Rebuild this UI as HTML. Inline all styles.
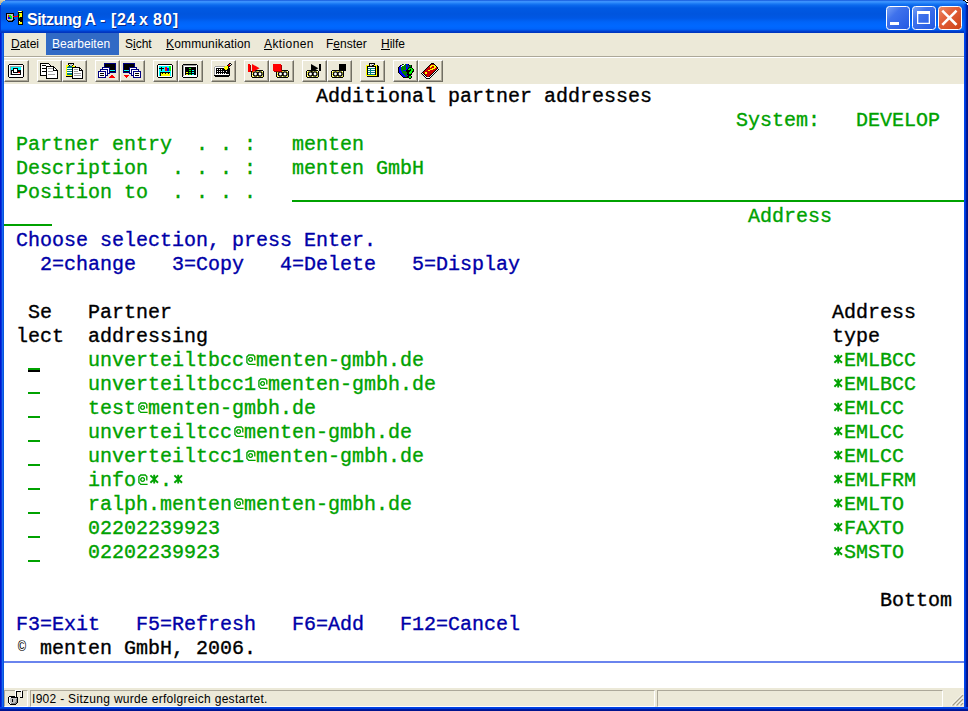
<!DOCTYPE html>
<html><head><meta charset="utf-8">
<style>
*{margin:0;padding:0;box-sizing:border-box}
html,body{width:968px;height:711px;overflow:hidden;background:#fff}
body{position:relative;font-family:"Liberation Sans",sans-serif}
.abs{position:absolute}
#title{left:0;top:0;width:968px;height:33px;
background:linear-gradient(to bottom,#0845d0 0px,#3a8dfb 1px,#3d95ff 2px,#2583f8 3px,#0c6aee 5px,#0059e3 8px,#0055de 14px,#0057e4 18px,#0064f8 22px,#0068ff 26px,#0064fa 29px,#0056ec 30px,#0046d6 31px,#0036c0 32px,#0036c0 33px)}
.ttext{left:28px;top:11px;font:bold 16px "Liberation Sans",sans-serif;color:#fff;text-shadow:1px 1px 0 #0a2a8a;white-space:nowrap;line-height:18px}
.lb{left:0;width:4px;top:33px;height:678px;background:linear-gradient(to right,#0019cf 0,#0019cf 1px,#0a34dc 1px,#0a34dc 2px,#166aef 2px,#166aef 3px,#0855dd 3px)}
.rb{left:964px;width:4px;top:33px;height:678px;background:linear-gradient(to right,#0046ec 0,#0046ec 1px,#0038d8 1px,#0038d8 2px,#001a98 2px,#001a98 3px,#00138a 3px)}
.bb{left:0;top:707px;width:968px;height:4px;background:linear-gradient(to bottom,#0042e8 0,#0042e8 1px,#003cd6 1px,#003cd6 2px,#0018a0 2px,#0018a0 3px,#00138f 3px)}
#menu{left:4px;top:33px;width:960px;height:23px;background:#ece9d8}
.mi{position:absolute;top:0;height:22px;font-size:12px;line-height:22px;color:#000;white-space:nowrap}
.mi u{text-decoration:none;border-bottom:1px solid currentColor;line-height:10px;display:inline-block}
#sep1{left:4px;top:56px;width:960px;height:1px;background:#aca899}
#sep2{left:4px;top:57px;width:960px;height:1px;background:#fff}
#tool{left:4px;top:58px;width:960px;height:26px;background:#ece9d8}
.btn{position:absolute;top:60px;width:25px;height:22px;border-left:1px solid #fff;border-top:1px solid #fff;border-right:1px solid #716f64;border-bottom:1px solid #716f64;box-shadow:inset -1px -1px 0 #aca899;background:#ece9d8}
.btn svg{position:absolute;left:3px;top:2px}
#term{left:4px;top:84px;width:960px;height:604px;background:#fff}
.t{position:absolute;font:20px "Liberation Mono",monospace;line-height:24px;height:24px;white-space:pre;-webkit-text-stroke:0.35px currentColor}
.at{display:inline-block;width:12px;text-align:center;font-size:15px;-webkit-text-stroke:0;vertical-align:top;position:relative;top:1px}
.ast{display:inline-block;vertical-align:top}
.cp{display:inline-block;width:12px;text-align:center;font-size:14px;-webkit-text-stroke:0;vertical-align:top;position:relative;top:-2px}
.g{color:#00a200}.k{color:#000}.b{color:#0000a8}
.ul{position:absolute;height:2px;background:#00a200}
#oia{left:4px;top:661px;width:960px;height:2px;background:#6a84ee}
#status{left:4px;top:688px;width:960px;height:19px;background:#ece9d8}
.pan{position:absolute;top:690px;height:17px;border-left:1px solid #aca899;border-top:1px solid #aca899;border-right:1px solid #fff;border-bottom:1px solid #fff}
</style></head><body>
<div id="title" class="abs"></div>
<div class="abs ttext" style="left:27px;letter-spacing:-0.5px">Sitzung A</div><div class="abs ttext" style="left:100px">-</div><div class="abs ttext" style="left:111px;letter-spacing:0.6px">[24</div><div class="abs ttext" style="left:139px">x</div><div class="abs ttext" style="left:153px;letter-spacing:1px">80]</div>

<div id="menu" class="abs"></div>
<div class="abs" style="left:46px;top:33px;width:73px;height:22px;background:#316ac5"></div>
<div class="mi" style="left:11px;top:33px"><u>D</u>atei</div>
<div class="mi" style="left:52px;top:33px;color:#fff"><u style="border-color:#0a246a">B</u>earbeiten</div>
<div class="mi" style="left:125px;top:33px">S<u>i</u>cht</div>
<div class="mi" style="left:166px;top:33px;letter-spacing:0.15px"><u>K</u>ommunikation</div>
<div class="mi" style="left:264px;top:33px;letter-spacing:0.4px"><u>A</u>ktionen</div>
<div class="mi" style="left:326px;top:33px">F<u>e</u>nster</div>
<div class="mi" style="left:381px;top:33px"><u>H</u>ilfe</div>
<div id="sep1" class="abs"></div><div id="sep2" class="abs"></div>
<div id="tool" class="abs"></div>
<div class="btn" style="left:4px"></div>
<div class="btn" style="left:37px"></div>
<div class="btn" style="left:62px"></div>
<div class="btn" style="left:95px"></div>
<div class="btn" style="left:120px"></div>
<div class="btn" style="left:153px"></div>
<div class="btn" style="left:178px"></div>
<div class="btn" style="left:211px"></div>
<div class="btn" style="left:244px"></div>
<div class="btn" style="left:269px"></div>
<div class="btn" style="left:302px"></div>
<div class="btn" style="left:327px"></div>
<div class="btn" style="left:360px"></div>
<div class="btn" style="left:393px"></div>
<div class="btn" style="left:418px"></div>
<svg class="abs" style="left:0;top:0" width="460" height="84" shape-rendering="crispEdges"><rect x="9" y="64" width="14" height="1" fill="#000"/><rect x="8" y="65" width="1" height="1" fill="#000"/><rect x="9" y="65" width="14" height="1" fill="#fff"/><rect x="23" y="65" width="1" height="1" fill="#000"/><rect x="8" y="66" width="1" height="1" fill="#000"/><rect x="9" y="66" width="1" height="1" fill="#fff"/><rect x="10" y="66" width="12" height="1" fill="#a0a0a0"/><rect x="22" y="66" width="1" height="1" fill="#fff"/><rect x="23" y="66" width="1" height="1" fill="#000"/><rect x="8" y="67" width="1" height="1" fill="#000"/><rect x="9" y="67" width="1" height="1" fill="#fff"/><rect x="10" y="67" width="1" height="1" fill="#a0a0a0"/><rect x="11" y="67" width="10" height="1" fill="#00ffff"/><rect x="21" y="67" width="2" height="1" fill="#fff"/><rect x="23" y="67" width="1" height="1" fill="#000"/><rect x="8" y="68" width="1" height="1" fill="#000"/><rect x="9" y="68" width="1" height="1" fill="#fff"/><rect x="10" y="68" width="1" height="1" fill="#a0a0a0"/><rect x="11" y="68" width="2" height="1" fill="#00ffff"/><rect x="13" y="68" width="5" height="1" fill="#000"/><rect x="18" y="68" width="3" height="1" fill="#00ffff"/><rect x="21" y="68" width="2" height="1" fill="#fff"/><rect x="23" y="68" width="1" height="1" fill="#000"/><rect x="8" y="69" width="1" height="1" fill="#000"/><rect x="9" y="69" width="1" height="1" fill="#fff"/><rect x="10" y="69" width="1" height="1" fill="#a0a0a0"/><rect x="11" y="69" width="2" height="1" fill="#00ffff"/><rect x="13" y="69" width="1" height="1" fill="#000"/><rect x="14" y="69" width="3" height="1" fill="#fff"/><rect x="17" y="69" width="1" height="1" fill="#000"/><rect x="18" y="69" width="3" height="1" fill="#00ffff"/><rect x="21" y="69" width="2" height="1" fill="#fff"/><rect x="23" y="69" width="1" height="1" fill="#000"/><rect x="8" y="70" width="1" height="1" fill="#000"/><rect x="9" y="70" width="1" height="1" fill="#fff"/><rect x="10" y="70" width="1" height="1" fill="#a0a0a0"/><rect x="11" y="70" width="3" height="1" fill="#000"/><rect x="14" y="70" width="3" height="1" fill="#fff"/><rect x="17" y="70" width="4" height="1" fill="#000"/><rect x="21" y="70" width="2" height="1" fill="#fff"/><rect x="23" y="70" width="1" height="1" fill="#000"/><rect x="8" y="71" width="1" height="1" fill="#000"/><rect x="9" y="71" width="1" height="1" fill="#fff"/><rect x="10" y="71" width="1" height="1" fill="#a0a0a0"/><rect x="11" y="71" width="1" height="1" fill="#000"/><rect x="12" y="71" width="1" height="1" fill="#fff"/><rect x="13" y="71" width="1" height="1" fill="#000"/><rect x="14" y="71" width="3" height="1" fill="#fff"/><rect x="17" y="71" width="4" height="1" fill="#000"/><rect x="21" y="71" width="2" height="1" fill="#fff"/><rect x="23" y="71" width="1" height="1" fill="#000"/><rect x="8" y="72" width="1" height="1" fill="#000"/><rect x="9" y="72" width="1" height="1" fill="#fff"/><rect x="10" y="72" width="1" height="1" fill="#a0a0a0"/><rect x="11" y="72" width="1" height="1" fill="#000"/><rect x="12" y="72" width="1" height="1" fill="#fff"/><rect x="13" y="72" width="5" height="1" fill="#000"/><rect x="18" y="72" width="2" height="1" fill="#ff0000"/><rect x="20" y="72" width="1" height="1" fill="#000"/><rect x="21" y="72" width="2" height="1" fill="#fff"/><rect x="23" y="72" width="1" height="1" fill="#000"/><rect x="8" y="73" width="1" height="1" fill="#000"/><rect x="9" y="73" width="1" height="1" fill="#fff"/><rect x="10" y="73" width="1" height="1" fill="#a0a0a0"/><rect x="11" y="73" width="1" height="1" fill="#000"/><rect x="12" y="73" width="8" height="1" fill="#fff"/><rect x="20" y="73" width="1" height="1" fill="#000"/><rect x="21" y="73" width="2" height="1" fill="#fff"/><rect x="23" y="73" width="1" height="1" fill="#000"/><rect x="8" y="74" width="1" height="1" fill="#000"/><rect x="9" y="74" width="1" height="1" fill="#fff"/><rect x="10" y="74" width="1" height="1" fill="#a0a0a0"/><rect x="11" y="74" width="10" height="1" fill="#000"/><rect x="21" y="74" width="2" height="1" fill="#fff"/><rect x="23" y="74" width="1" height="1" fill="#000"/><rect x="8" y="75" width="1" height="1" fill="#000"/><rect x="9" y="75" width="14" height="1" fill="#fff"/><rect x="23" y="75" width="1" height="1" fill="#000"/><rect x="8" y="76" width="1" height="1" fill="#000"/><rect x="9" y="76" width="14" height="1" fill="#fff"/><rect x="23" y="76" width="1" height="1" fill="#000"/><rect x="9" y="77" width="14" height="1" fill="#000"/><rect x="40" y="63" width="9" height="1" fill="#000"/><rect x="40" y="64" width="1" height="1" fill="#000"/><rect x="41" y="64" width="8" height="1" fill="#fff"/><rect x="49" y="64" width="1" height="1" fill="#000"/><rect x="40" y="65" width="1" height="1" fill="#000"/><rect x="41" y="65" width="1" height="1" fill="#fff"/><rect x="42" y="65" width="4" height="1" fill="#000"/><rect x="46" y="65" width="4" height="1" fill="#fff"/><rect x="50" y="65" width="1" height="1" fill="#000"/><rect x="40" y="66" width="1" height="1" fill="#000"/><rect x="41" y="66" width="5" height="1" fill="#fff"/><rect x="46" y="66" width="8" height="1" fill="#000"/><rect x="40" y="67" width="1" height="1" fill="#000"/><rect x="41" y="67" width="5" height="1" fill="#fff"/><rect x="46" y="67" width="1" height="1" fill="#000"/><rect x="47" y="67" width="6" height="1" fill="#fff"/><rect x="53" y="67" width="2" height="1" fill="#000"/><rect x="40" y="68" width="1" height="1" fill="#000"/><rect x="41" y="68" width="1" height="1" fill="#fff"/><rect x="42" y="68" width="5" height="1" fill="#000"/><rect x="47" y="68" width="1" height="1" fill="#fff"/><rect x="48" y="68" width="5" height="1" fill="#a0a0a0"/><rect x="53" y="68" width="1" height="1" fill="#000"/><rect x="54" y="68" width="1" height="1" fill="#fff"/><rect x="55" y="68" width="1" height="1" fill="#000"/><rect x="40" y="69" width="1" height="1" fill="#000"/><rect x="41" y="69" width="5" height="1" fill="#fff"/><rect x="46" y="69" width="1" height="1" fill="#000"/><rect x="47" y="69" width="6" height="1" fill="#fff"/><rect x="53" y="69" width="1" height="1" fill="#000"/><rect x="54" y="69" width="2" height="1" fill="#fff"/><rect x="56" y="69" width="1" height="1" fill="#000"/><rect x="40" y="70" width="1" height="1" fill="#000"/><rect x="41" y="70" width="5" height="1" fill="#fff"/><rect x="46" y="70" width="1" height="1" fill="#000"/><rect x="47" y="70" width="6" height="1" fill="#fff"/><rect x="53" y="70" width="5" height="1" fill="#000"/><rect x="40" y="71" width="1" height="1" fill="#000"/><rect x="41" y="71" width="1" height="1" fill="#fff"/><rect x="42" y="71" width="5" height="1" fill="#000"/><rect x="47" y="71" width="1" height="1" fill="#fff"/><rect x="48" y="71" width="5" height="1" fill="#a0a0a0"/><rect x="53" y="71" width="4" height="1" fill="#fff"/><rect x="57" y="71" width="1" height="1" fill="#000"/><rect x="40" y="72" width="1" height="1" fill="#000"/><rect x="41" y="72" width="5" height="1" fill="#fff"/><rect x="46" y="72" width="1" height="1" fill="#000"/><rect x="47" y="72" width="10" height="1" fill="#fff"/><rect x="57" y="72" width="1" height="1" fill="#000"/><rect x="40" y="73" width="1" height="1" fill="#000"/><rect x="41" y="73" width="5" height="1" fill="#fff"/><rect x="46" y="73" width="1" height="1" fill="#000"/><rect x="47" y="73" width="10" height="1" fill="#fff"/><rect x="57" y="73" width="1" height="1" fill="#000"/><rect x="40" y="74" width="1" height="1" fill="#000"/><rect x="41" y="74" width="5" height="1" fill="#fff"/><rect x="46" y="74" width="1" height="1" fill="#000"/><rect x="47" y="74" width="1" height="1" fill="#fff"/><rect x="48" y="74" width="7" height="1" fill="#a0a0a0"/><rect x="55" y="74" width="2" height="1" fill="#fff"/><rect x="57" y="74" width="1" height="1" fill="#000"/><rect x="40" y="75" width="7" height="1" fill="#000"/><rect x="47" y="75" width="10" height="1" fill="#fff"/><rect x="57" y="75" width="1" height="1" fill="#000"/><rect x="46" y="76" width="1" height="1" fill="#000"/><rect x="47" y="76" width="10" height="1" fill="#fff"/><rect x="57" y="76" width="1" height="1" fill="#000"/><rect x="46" y="77" width="1" height="1" fill="#000"/><rect x="47" y="77" width="10" height="1" fill="#fff"/><rect x="57" y="77" width="1" height="1" fill="#000"/><rect x="46" y="78" width="12" height="1" fill="#000"/><rect x="68" y="63" width="6" height="1" fill="#000"/><rect x="68" y="64" width="1" height="1" fill="#000"/><rect x="69" y="64" width="1" height="1" fill="#fff"/><rect x="70" y="64" width="2" height="1" fill="#c0c0c0"/><rect x="72" y="64" width="1" height="1" fill="#fff"/><rect x="73" y="64" width="1" height="1" fill="#000"/><rect x="66" y="65" width="3" height="1" fill="#ffff00"/><rect x="69" y="65" width="1" height="1" fill="#000"/><rect x="70" y="65" width="2" height="1" fill="#c0c0c0"/><rect x="72" y="65" width="1" height="1" fill="#000"/><rect x="73" y="65" width="1" height="1" fill="#ffff00"/><rect x="66" y="66" width="2" height="1" fill="#ffff00"/><rect x="68" y="66" width="4" height="1" fill="#008080"/><rect x="72" y="66" width="3" height="1" fill="#ffff00"/><rect x="75" y="66" width="1" height="1" fill="#000"/><rect x="66" y="67" width="1" height="1" fill="#ffff00"/><rect x="67" y="67" width="5" height="1" fill="#008080"/><rect x="72" y="67" width="8" height="1" fill="#000"/><rect x="66" y="68" width="1" height="1" fill="#ffff00"/><rect x="67" y="68" width="5" height="1" fill="#fff"/><rect x="72" y="68" width="1" height="1" fill="#000"/><rect x="73" y="68" width="6" height="1" fill="#fff"/><rect x="79" y="68" width="2" height="1" fill="#000"/><rect x="66" y="69" width="1" height="1" fill="#ffff00"/><rect x="67" y="69" width="5" height="1" fill="#008080"/><rect x="72" y="69" width="1" height="1" fill="#000"/><rect x="73" y="69" width="1" height="1" fill="#fff"/><rect x="74" y="69" width="4" height="1" fill="#a0a0a0"/><rect x="78" y="69" width="1" height="1" fill="#fff"/><rect x="79" y="69" width="1" height="1" fill="#000"/><rect x="80" y="69" width="1" height="1" fill="#fff"/><rect x="81" y="69" width="1" height="1" fill="#000"/><rect x="66" y="70" width="1" height="1" fill="#ffff00"/><rect x="67" y="70" width="5" height="1" fill="#fff"/><rect x="72" y="70" width="1" height="1" fill="#000"/><rect x="73" y="70" width="6" height="1" fill="#fff"/><rect x="79" y="70" width="4" height="1" fill="#000"/><rect x="66" y="71" width="1" height="1" fill="#ffff00"/><rect x="67" y="71" width="5" height="1" fill="#008080"/><rect x="72" y="71" width="1" height="1" fill="#000"/><rect x="73" y="71" width="1" height="1" fill="#fff"/><rect x="74" y="71" width="4" height="1" fill="#a0a0a0"/><rect x="78" y="71" width="4" height="1" fill="#fff"/><rect x="82" y="71" width="1" height="1" fill="#000"/><rect x="66" y="72" width="1" height="1" fill="#ffff00"/><rect x="67" y="72" width="5" height="1" fill="#fff"/><rect x="72" y="72" width="1" height="1" fill="#000"/><rect x="73" y="72" width="9" height="1" fill="#fff"/><rect x="82" y="72" width="1" height="1" fill="#000"/><rect x="66" y="73" width="1" height="1" fill="#ffff00"/><rect x="67" y="73" width="5" height="1" fill="#008080"/><rect x="72" y="73" width="1" height="1" fill="#000"/><rect x="73" y="73" width="1" height="1" fill="#fff"/><rect x="74" y="73" width="7" height="1" fill="#a0a0a0"/><rect x="81" y="73" width="1" height="1" fill="#fff"/><rect x="82" y="73" width="1" height="1" fill="#000"/><rect x="66" y="74" width="1" height="1" fill="#ffff00"/><rect x="67" y="74" width="5" height="1" fill="#008080"/><rect x="72" y="74" width="1" height="1" fill="#000"/><rect x="73" y="74" width="9" height="1" fill="#fff"/><rect x="82" y="74" width="1" height="1" fill="#000"/><rect x="66" y="75" width="6" height="1" fill="#ffff00"/><rect x="72" y="75" width="1" height="1" fill="#000"/><rect x="73" y="75" width="1" height="1" fill="#fff"/><rect x="74" y="75" width="7" height="1" fill="#a0a0a0"/><rect x="81" y="75" width="1" height="1" fill="#fff"/><rect x="82" y="75" width="1" height="1" fill="#000"/><rect x="66" y="76" width="7" height="1" fill="#000"/><rect x="73" y="76" width="9" height="1" fill="#fff"/><rect x="82" y="76" width="1" height="1" fill="#000"/><rect x="72" y="77" width="1" height="1" fill="#000"/><rect x="73" y="77" width="9" height="1" fill="#fff"/><rect x="82" y="77" width="1" height="1" fill="#000"/><rect x="72" y="78" width="11" height="1" fill="#000"/><rect x="104" y="63" width="12" height="10" fill="#000080"/><rect x="105" y="64" width="10" height="8" fill="#000"/><rect x="109" y="70" width="6" height="1" fill="#00ffff"/><rect x="102" y="67" width="8" height="7" fill="#000080"/><rect x="103" y="68" width="6" height="5" fill="#fff"/><rect x="100" y="69" width="8" height="7" fill="#000080"/><rect x="101" y="70" width="6" height="5" fill="#fff"/><rect x="98" y="71" width="8" height="7" fill="#000080"/><rect x="99" y="72" width="6" height="5" fill="#fff"/><rect x="100" y="73" width="4" height="1" fill="#000"/><rect x="100" y="75" width="4" height="1" fill="#000"/><polygon points="108.5,77.5 111.5,74.5 114.5,77.5" fill="#ff0000"/><rect x="123" y="63" width="12" height="10" fill="#000080"/><rect x="124" y="64" width="10" height="8" fill="#000"/><rect x="124" y="70" width="5" height="1" fill="#00ffff"/><rect x="129" y="67" width="8" height="7" fill="#000080"/><rect x="130" y="68" width="6" height="5" fill="#fff"/><rect x="131" y="69" width="8" height="7" fill="#000080"/><rect x="132" y="70" width="6" height="5" fill="#fff"/><rect x="133" y="71" width="8" height="7" fill="#000080"/><rect x="134" y="72" width="6" height="5" fill="#fff"/><rect x="135" y="73" width="4" height="1" fill="#000"/><rect x="135" y="75" width="4" height="1" fill="#000"/><polygon points="123.5,75 129.5,75 126.5,78" fill="#ff0000"/><rect x="158" y="64" width="14" height="1" fill="#000"/><rect x="157" y="65" width="1" height="1" fill="#000"/><rect x="158" y="65" width="14" height="1" fill="#fff"/><rect x="172" y="65" width="1" height="1" fill="#000"/><rect x="157" y="66" width="1" height="1" fill="#000"/><rect x="158" y="66" width="1" height="1" fill="#fff"/><rect x="159" y="66" width="10" height="1" fill="#00ffff"/><rect x="169" y="66" width="2" height="1" fill="#00ff00"/><rect x="171" y="66" width="1" height="1" fill="#fff"/><rect x="172" y="66" width="1" height="1" fill="#000"/><rect x="157" y="67" width="1" height="1" fill="#000"/><rect x="158" y="67" width="1" height="1" fill="#fff"/><rect x="159" y="67" width="2" height="1" fill="#00ffff"/><rect x="161" y="67" width="1" height="1" fill="#000"/><rect x="162" y="67" width="3" height="1" fill="#00ffff"/><rect x="165" y="67" width="2" height="1" fill="#ff0000"/><rect x="167" y="67" width="2" height="1" fill="#00ffff"/><rect x="169" y="67" width="2" height="1" fill="#00ff00"/><rect x="171" y="67" width="1" height="1" fill="#fff"/><rect x="172" y="67" width="1" height="1" fill="#000"/><rect x="157" y="68" width="1" height="1" fill="#000"/><rect x="158" y="68" width="1" height="1" fill="#fff"/><rect x="159" y="68" width="5" height="1" fill="#000"/><rect x="164" y="68" width="1" height="1" fill="#00ffff"/><rect x="165" y="68" width="2" height="1" fill="#ff0000"/><rect x="167" y="68" width="2" height="1" fill="#0000ff"/><rect x="169" y="68" width="2" height="1" fill="#00ff00"/><rect x="171" y="68" width="1" height="1" fill="#fff"/><rect x="172" y="68" width="1" height="1" fill="#000"/><rect x="157" y="69" width="1" height="1" fill="#000"/><rect x="158" y="69" width="1" height="1" fill="#fff"/><rect x="159" y="69" width="2" height="1" fill="#00ffff"/><rect x="161" y="69" width="1" height="1" fill="#000"/><rect x="162" y="69" width="3" height="1" fill="#00ffff"/><rect x="165" y="69" width="2" height="1" fill="#ff0000"/><rect x="167" y="69" width="2" height="1" fill="#0000ff"/><rect x="169" y="69" width="2" height="1" fill="#00ff00"/><rect x="171" y="69" width="1" height="1" fill="#fff"/><rect x="172" y="69" width="1" height="1" fill="#000"/><rect x="157" y="70" width="1" height="1" fill="#000"/><rect x="158" y="70" width="1" height="1" fill="#fff"/><rect x="159" y="70" width="2" height="1" fill="#00ffff"/><rect x="161" y="70" width="1" height="1" fill="#000"/><rect x="162" y="70" width="3" height="1" fill="#00ffff"/><rect x="165" y="70" width="2" height="1" fill="#ff0000"/><rect x="167" y="70" width="2" height="1" fill="#0000ff"/><rect x="169" y="70" width="2" height="1" fill="#00ff00"/><rect x="171" y="70" width="1" height="1" fill="#fff"/><rect x="172" y="70" width="1" height="1" fill="#000"/><rect x="157" y="71" width="1" height="1" fill="#000"/><rect x="158" y="71" width="1" height="1" fill="#fff"/><rect x="159" y="71" width="12" height="1" fill="#00ffff"/><rect x="171" y="71" width="1" height="1" fill="#fff"/><rect x="172" y="71" width="1" height="1" fill="#000"/><rect x="157" y="72" width="1" height="1" fill="#000"/><rect x="158" y="72" width="1" height="1" fill="#fff"/><rect x="159" y="72" width="1" height="1" fill="#00ffff"/><rect x="160" y="72" width="10" height="1" fill="#000"/><rect x="170" y="72" width="1" height="1" fill="#00ffff"/><rect x="171" y="72" width="1" height="1" fill="#fff"/><rect x="172" y="72" width="1" height="1" fill="#000"/><rect x="157" y="73" width="1" height="1" fill="#000"/><rect x="158" y="73" width="1" height="1" fill="#fff"/><rect x="159" y="73" width="1" height="1" fill="#00ffff"/><rect x="160" y="73" width="1" height="1" fill="#000"/><rect x="161" y="73" width="1" height="1" fill="#ffff00"/><rect x="162" y="73" width="1" height="1" fill="#000"/><rect x="163" y="73" width="2" height="1" fill="#ffff00"/><rect x="165" y="73" width="1" height="1" fill="#000"/><rect x="166" y="73" width="2" height="1" fill="#ffff00"/><rect x="168" y="73" width="1" height="1" fill="#000"/><rect x="169" y="73" width="1" height="1" fill="#ffff00"/><rect x="170" y="73" width="1" height="1" fill="#00ffff"/><rect x="171" y="73" width="1" height="1" fill="#fff"/><rect x="172" y="73" width="1" height="1" fill="#000"/><rect x="157" y="74" width="1" height="1" fill="#000"/><rect x="158" y="74" width="1" height="1" fill="#fff"/><rect x="159" y="74" width="1" height="1" fill="#00ffff"/><rect x="160" y="74" width="1" height="1" fill="#000"/><rect x="161" y="74" width="9" height="1" fill="#ffff00"/><rect x="170" y="74" width="1" height="1" fill="#00ffff"/><rect x="171" y="74" width="1" height="1" fill="#fff"/><rect x="172" y="74" width="1" height="1" fill="#000"/><rect x="157" y="75" width="1" height="1" fill="#000"/><rect x="158" y="75" width="1" height="1" fill="#fff"/><rect x="159" y="75" width="1" height="1" fill="#00ffff"/><rect x="160" y="75" width="1" height="1" fill="#000"/><rect x="161" y="75" width="9" height="1" fill="#ffff00"/><rect x="170" y="75" width="1" height="1" fill="#00ffff"/><rect x="171" y="75" width="1" height="1" fill="#fff"/><rect x="172" y="75" width="1" height="1" fill="#000"/><rect x="157" y="76" width="1" height="1" fill="#000"/><rect x="158" y="76" width="14" height="1" fill="#fff"/><rect x="172" y="76" width="1" height="1" fill="#000"/><rect x="158" y="77" width="14" height="1" fill="#000"/><rect x="183" y="64" width="14" height="1" fill="#000"/><rect x="182" y="65" width="1" height="1" fill="#000"/><rect x="183" y="65" width="13" height="1" fill="#a0a0a0"/><rect x="196" y="65" width="1" height="1" fill="#fff"/><rect x="197" y="65" width="1" height="1" fill="#000"/><rect x="182" y="66" width="1" height="1" fill="#000"/><rect x="183" y="66" width="1" height="1" fill="#a0a0a0"/><rect x="184" y="66" width="13" height="1" fill="#fff"/><rect x="197" y="66" width="1" height="1" fill="#000"/><rect x="182" y="67" width="1" height="1" fill="#000"/><rect x="183" y="67" width="1" height="1" fill="#a0a0a0"/><rect x="184" y="67" width="1" height="1" fill="#fff"/><rect x="185" y="67" width="11" height="1" fill="#000"/><rect x="196" y="67" width="1" height="1" fill="#fff"/><rect x="197" y="67" width="1" height="1" fill="#000"/><rect x="182" y="68" width="1" height="1" fill="#000"/><rect x="183" y="68" width="1" height="1" fill="#a0a0a0"/><rect x="184" y="68" width="1" height="1" fill="#fff"/><rect x="185" y="68" width="4" height="1" fill="#000"/><rect x="189" y="68" width="2" height="1" fill="#00ff00"/><rect x="191" y="68" width="5" height="1" fill="#000"/><rect x="196" y="68" width="1" height="1" fill="#fff"/><rect x="197" y="68" width="1" height="1" fill="#000"/><rect x="182" y="69" width="1" height="1" fill="#000"/><rect x="183" y="69" width="1" height="1" fill="#a0a0a0"/><rect x="184" y="69" width="1" height="1" fill="#fff"/><rect x="185" y="69" width="11" height="1" fill="#000"/><rect x="196" y="69" width="1" height="1" fill="#fff"/><rect x="197" y="69" width="1" height="1" fill="#000"/><rect x="182" y="70" width="1" height="1" fill="#000"/><rect x="183" y="70" width="1" height="1" fill="#a0a0a0"/><rect x="184" y="70" width="1" height="1" fill="#fff"/><rect x="185" y="70" width="4" height="1" fill="#000"/><rect x="189" y="70" width="2" height="1" fill="#00ff00"/><rect x="191" y="70" width="1" height="1" fill="#000"/><rect x="192" y="70" width="2" height="1" fill="#00ffff"/><rect x="194" y="70" width="2" height="1" fill="#000"/><rect x="196" y="70" width="1" height="1" fill="#fff"/><rect x="197" y="70" width="1" height="1" fill="#000"/><rect x="182" y="71" width="1" height="1" fill="#000"/><rect x="183" y="71" width="1" height="1" fill="#a0a0a0"/><rect x="184" y="71" width="1" height="1" fill="#fff"/><rect x="185" y="71" width="11" height="1" fill="#000"/><rect x="196" y="71" width="1" height="1" fill="#fff"/><rect x="197" y="71" width="1" height="1" fill="#000"/><rect x="182" y="72" width="1" height="1" fill="#000"/><rect x="183" y="72" width="1" height="1" fill="#a0a0a0"/><rect x="184" y="72" width="1" height="1" fill="#fff"/><rect x="185" y="72" width="1" height="1" fill="#000"/><rect x="186" y="72" width="2" height="1" fill="#ffff00"/><rect x="188" y="72" width="1" height="1" fill="#000"/><rect x="189" y="72" width="2" height="1" fill="#00ff00"/><rect x="191" y="72" width="1" height="1" fill="#000"/><rect x="192" y="72" width="2" height="1" fill="#00ffff"/><rect x="194" y="72" width="2" height="1" fill="#000"/><rect x="196" y="72" width="1" height="1" fill="#fff"/><rect x="197" y="72" width="1" height="1" fill="#000"/><rect x="182" y="73" width="1" height="1" fill="#000"/><rect x="183" y="73" width="1" height="1" fill="#a0a0a0"/><rect x="184" y="73" width="1" height="1" fill="#fff"/><rect x="185" y="73" width="11" height="1" fill="#000"/><rect x="196" y="73" width="1" height="1" fill="#fff"/><rect x="197" y="73" width="1" height="1" fill="#000"/><rect x="182" y="74" width="1" height="1" fill="#000"/><rect x="183" y="74" width="1" height="1" fill="#a0a0a0"/><rect x="184" y="74" width="1" height="1" fill="#fff"/><rect x="185" y="74" width="1" height="1" fill="#000"/><rect x="186" y="74" width="2" height="1" fill="#ffff00"/><rect x="188" y="74" width="1" height="1" fill="#000"/><rect x="189" y="74" width="2" height="1" fill="#00ff00"/><rect x="191" y="74" width="1" height="1" fill="#000"/><rect x="192" y="74" width="2" height="1" fill="#00ffff"/><rect x="194" y="74" width="2" height="1" fill="#000"/><rect x="196" y="74" width="1" height="1" fill="#fff"/><rect x="197" y="74" width="1" height="1" fill="#000"/><rect x="182" y="75" width="1" height="1" fill="#000"/><rect x="183" y="75" width="1" height="1" fill="#a0a0a0"/><rect x="184" y="75" width="13" height="1" fill="#fff"/><rect x="197" y="75" width="1" height="1" fill="#000"/><rect x="182" y="76" width="1" height="1" fill="#000"/><rect x="183" y="76" width="14" height="1" fill="#fff"/><rect x="197" y="76" width="1" height="1" fill="#000"/><rect x="183" y="77" width="14" height="1" fill="#000"/><rect x="229" y="63" width="2" height="1" fill="#000"/><rect x="228" y="64" width="1" height="1" fill="#000"/><rect x="229" y="64" width="1" height="1" fill="#ff0000"/><rect x="230" y="64" width="1" height="1" fill="#fff"/><rect x="231" y="64" width="1" height="1" fill="#000"/><rect x="227" y="65" width="1" height="1" fill="#000"/><rect x="228" y="65" width="2" height="1" fill="#ff0000"/><rect x="230" y="65" width="1" height="1" fill="#000"/><rect x="215" y="66" width="10" height="1" fill="#a0a0a0"/><rect x="225" y="66" width="3" height="1" fill="#ffff00"/><rect x="228" y="66" width="2" height="1" fill="#000"/><rect x="214" y="67" width="1" height="1" fill="#a0a0a0"/><rect x="215" y="67" width="9" height="1" fill="#fff"/><rect x="224" y="67" width="4" height="1" fill="#ffff00"/><rect x="228" y="67" width="1" height="1" fill="#000"/><rect x="214" y="68" width="1" height="1" fill="#a0a0a0"/><rect x="215" y="68" width="1" height="1" fill="#fff"/><rect x="216" y="68" width="8" height="1" fill="#000"/><rect x="224" y="68" width="4" height="1" fill="#ffff00"/><rect x="228" y="68" width="2" height="1" fill="#000"/><rect x="214" y="69" width="1" height="1" fill="#a0a0a0"/><rect x="215" y="69" width="1" height="1" fill="#fff"/><rect x="216" y="69" width="1" height="1" fill="#000"/><rect x="217" y="69" width="1" height="1" fill="#fff"/><rect x="218" y="69" width="1" height="1" fill="#000"/><rect x="219" y="69" width="1" height="1" fill="#fff"/><rect x="220" y="69" width="1" height="1" fill="#000"/><rect x="221" y="69" width="1" height="1" fill="#fff"/><rect x="222" y="69" width="3" height="1" fill="#000"/><rect x="225" y="69" width="2" height="1" fill="#ffff00"/><rect x="227" y="69" width="3" height="1" fill="#000"/><rect x="214" y="70" width="1" height="1" fill="#a0a0a0"/><rect x="215" y="70" width="1" height="1" fill="#fff"/><rect x="216" y="70" width="14" height="1" fill="#000"/><rect x="214" y="71" width="1" height="1" fill="#a0a0a0"/><rect x="215" y="71" width="1" height="1" fill="#fff"/><rect x="216" y="71" width="1" height="1" fill="#000"/><rect x="217" y="71" width="1" height="1" fill="#fff"/><rect x="218" y="71" width="1" height="1" fill="#000"/><rect x="219" y="71" width="1" height="1" fill="#fff"/><rect x="220" y="71" width="1" height="1" fill="#000"/><rect x="221" y="71" width="1" height="1" fill="#fff"/><rect x="222" y="71" width="1" height="1" fill="#000"/><rect x="223" y="71" width="1" height="1" fill="#fff"/><rect x="224" y="71" width="2" height="1" fill="#000"/><rect x="226" y="71" width="1" height="1" fill="#fff"/><rect x="227" y="71" width="3" height="1" fill="#000"/><rect x="214" y="72" width="1" height="1" fill="#a0a0a0"/><rect x="215" y="72" width="1" height="1" fill="#fff"/><rect x="216" y="72" width="14" height="1" fill="#000"/><rect x="214" y="73" width="1" height="1" fill="#a0a0a0"/><rect x="215" y="73" width="1" height="1" fill="#fff"/><rect x="216" y="73" width="1" height="1" fill="#000"/><rect x="217" y="73" width="1" height="1" fill="#fff"/><rect x="218" y="73" width="1" height="1" fill="#000"/><rect x="219" y="73" width="1" height="1" fill="#fff"/><rect x="220" y="73" width="1" height="1" fill="#000"/><rect x="221" y="73" width="1" height="1" fill="#fff"/><rect x="222" y="73" width="1" height="1" fill="#000"/><rect x="223" y="73" width="1" height="1" fill="#fff"/><rect x="224" y="73" width="1" height="1" fill="#000"/><rect x="225" y="73" width="1" height="1" fill="#fff"/><rect x="226" y="73" width="4" height="1" fill="#000"/><rect x="214" y="74" width="1" height="1" fill="#a0a0a0"/><rect x="215" y="74" width="14" height="1" fill="#fff"/><rect x="229" y="74" width="1" height="1" fill="#000"/><rect x="214" y="75" width="16" height="1" fill="#000"/><rect x="215" y="76" width="14" height="1" fill="#000"/><rect x="252" y="70" width="11" height="8" fill="#000"/><rect x="251" y="71" width="13" height="6" fill="#000"/><rect x="252" y="71" width="11" height="6" fill="#ffff00"/><rect x="252" y="71" width="1" height="1" fill="#fffff0"/><rect x="254" y="71" width="1" height="1" fill="#fffff0"/><rect x="256" y="71" width="1" height="1" fill="#fffff0"/><rect x="258" y="71" width="1" height="1" fill="#fffff0"/><rect x="260" y="71" width="1" height="1" fill="#fffff0"/><rect x="262" y="71" width="1" height="1" fill="#fffff0"/><rect x="253" y="72" width="1" height="1" fill="#fffff0"/><rect x="255" y="72" width="1" height="1" fill="#fffff0"/><rect x="257" y="72" width="1" height="1" fill="#fffff0"/><rect x="259" y="72" width="1" height="1" fill="#fffff0"/><rect x="261" y="72" width="1" height="1" fill="#fffff0"/><rect x="252" y="73" width="1" height="1" fill="#fffff0"/><rect x="254" y="73" width="1" height="1" fill="#fffff0"/><rect x="256" y="73" width="1" height="1" fill="#fffff0"/><rect x="258" y="73" width="1" height="1" fill="#fffff0"/><rect x="260" y="73" width="1" height="1" fill="#fffff0"/><rect x="262" y="73" width="1" height="1" fill="#fffff0"/><rect x="253" y="74" width="1" height="1" fill="#fffff0"/><rect x="255" y="74" width="1" height="1" fill="#fffff0"/><rect x="257" y="74" width="1" height="1" fill="#fffff0"/><rect x="259" y="74" width="1" height="1" fill="#fffff0"/><rect x="261" y="74" width="1" height="1" fill="#fffff0"/><rect x="252" y="75" width="1" height="1" fill="#fffff0"/><rect x="254" y="75" width="1" height="1" fill="#fffff0"/><rect x="256" y="75" width="1" height="1" fill="#fffff0"/><rect x="258" y="75" width="1" height="1" fill="#fffff0"/><rect x="260" y="75" width="1" height="1" fill="#fffff0"/><rect x="262" y="75" width="1" height="1" fill="#fffff0"/><rect x="253" y="76" width="1" height="1" fill="#fffff0"/><rect x="255" y="76" width="1" height="1" fill="#fffff0"/><rect x="257" y="76" width="1" height="1" fill="#fffff0"/><rect x="259" y="76" width="1" height="1" fill="#fffff0"/><rect x="261" y="76" width="1" height="1" fill="#fffff0"/><g shape-rendering="geometricPrecision"><circle cx="255.5" cy="74" r="2.05" fill="#fff" stroke="#000" stroke-width="1.25"/><circle cx="260" cy="74" r="2.05" fill="#fff" stroke="#000" stroke-width="1.25"/></g><rect x="248" y="64" width="2" height="8" fill="#ff0000"/><rect x="250" y="65" width="1" height="7" fill="#a00000"/><g shape-rendering="geometricPrecision"><polygon points="252,64 259.6,68.2 252,72.4" fill="#ff0000"/></g><rect x="252" y="71" width="1" height="1" fill="#a00000"/><rect x="277" y="70" width="11" height="8" fill="#000"/><rect x="276" y="71" width="13" height="6" fill="#000"/><rect x="277" y="71" width="11" height="6" fill="#ffff00"/><rect x="277" y="71" width="1" height="1" fill="#fffff0"/><rect x="279" y="71" width="1" height="1" fill="#fffff0"/><rect x="281" y="71" width="1" height="1" fill="#fffff0"/><rect x="283" y="71" width="1" height="1" fill="#fffff0"/><rect x="285" y="71" width="1" height="1" fill="#fffff0"/><rect x="287" y="71" width="1" height="1" fill="#fffff0"/><rect x="278" y="72" width="1" height="1" fill="#fffff0"/><rect x="280" y="72" width="1" height="1" fill="#fffff0"/><rect x="282" y="72" width="1" height="1" fill="#fffff0"/><rect x="284" y="72" width="1" height="1" fill="#fffff0"/><rect x="286" y="72" width="1" height="1" fill="#fffff0"/><rect x="277" y="73" width="1" height="1" fill="#fffff0"/><rect x="279" y="73" width="1" height="1" fill="#fffff0"/><rect x="281" y="73" width="1" height="1" fill="#fffff0"/><rect x="283" y="73" width="1" height="1" fill="#fffff0"/><rect x="285" y="73" width="1" height="1" fill="#fffff0"/><rect x="287" y="73" width="1" height="1" fill="#fffff0"/><rect x="278" y="74" width="1" height="1" fill="#fffff0"/><rect x="280" y="74" width="1" height="1" fill="#fffff0"/><rect x="282" y="74" width="1" height="1" fill="#fffff0"/><rect x="284" y="74" width="1" height="1" fill="#fffff0"/><rect x="286" y="74" width="1" height="1" fill="#fffff0"/><rect x="277" y="75" width="1" height="1" fill="#fffff0"/><rect x="279" y="75" width="1" height="1" fill="#fffff0"/><rect x="281" y="75" width="1" height="1" fill="#fffff0"/><rect x="283" y="75" width="1" height="1" fill="#fffff0"/><rect x="285" y="75" width="1" height="1" fill="#fffff0"/><rect x="287" y="75" width="1" height="1" fill="#fffff0"/><rect x="278" y="76" width="1" height="1" fill="#fffff0"/><rect x="280" y="76" width="1" height="1" fill="#fffff0"/><rect x="282" y="76" width="1" height="1" fill="#fffff0"/><rect x="284" y="76" width="1" height="1" fill="#fffff0"/><rect x="286" y="76" width="1" height="1" fill="#fffff0"/><g shape-rendering="geometricPrecision"><circle cx="280.5" cy="74" r="2.05" fill="#fff" stroke="#000" stroke-width="1.25"/><circle cx="285" cy="74" r="2.05" fill="#fff" stroke="#000" stroke-width="1.25"/></g><rect x="274" y="65" width="8" height="7" fill="#a00000"/><rect x="273" y="64" width="8" height="7" fill="#ff0000"/><rect x="307" y="70" width="11" height="8" fill="#000"/><rect x="306" y="71" width="13" height="6" fill="#000"/><rect x="307" y="71" width="11" height="6" fill="#ffff00"/><rect x="307" y="71" width="1" height="1" fill="#fffff0"/><rect x="309" y="71" width="1" height="1" fill="#fffff0"/><rect x="311" y="71" width="1" height="1" fill="#fffff0"/><rect x="313" y="71" width="1" height="1" fill="#fffff0"/><rect x="315" y="71" width="1" height="1" fill="#fffff0"/><rect x="317" y="71" width="1" height="1" fill="#fffff0"/><rect x="308" y="72" width="1" height="1" fill="#fffff0"/><rect x="310" y="72" width="1" height="1" fill="#fffff0"/><rect x="312" y="72" width="1" height="1" fill="#fffff0"/><rect x="314" y="72" width="1" height="1" fill="#fffff0"/><rect x="316" y="72" width="1" height="1" fill="#fffff0"/><rect x="307" y="73" width="1" height="1" fill="#fffff0"/><rect x="309" y="73" width="1" height="1" fill="#fffff0"/><rect x="311" y="73" width="1" height="1" fill="#fffff0"/><rect x="313" y="73" width="1" height="1" fill="#fffff0"/><rect x="315" y="73" width="1" height="1" fill="#fffff0"/><rect x="317" y="73" width="1" height="1" fill="#fffff0"/><rect x="308" y="74" width="1" height="1" fill="#fffff0"/><rect x="310" y="74" width="1" height="1" fill="#fffff0"/><rect x="312" y="74" width="1" height="1" fill="#fffff0"/><rect x="314" y="74" width="1" height="1" fill="#fffff0"/><rect x="316" y="74" width="1" height="1" fill="#fffff0"/><rect x="307" y="75" width="1" height="1" fill="#fffff0"/><rect x="309" y="75" width="1" height="1" fill="#fffff0"/><rect x="311" y="75" width="1" height="1" fill="#fffff0"/><rect x="313" y="75" width="1" height="1" fill="#fffff0"/><rect x="315" y="75" width="1" height="1" fill="#fffff0"/><rect x="317" y="75" width="1" height="1" fill="#fffff0"/><rect x="308" y="76" width="1" height="1" fill="#fffff0"/><rect x="310" y="76" width="1" height="1" fill="#fffff0"/><rect x="312" y="76" width="1" height="1" fill="#fffff0"/><rect x="314" y="76" width="1" height="1" fill="#fffff0"/><rect x="316" y="76" width="1" height="1" fill="#fffff0"/><g shape-rendering="geometricPrecision"><circle cx="310.5" cy="74" r="2.05" fill="#fff" stroke="#000" stroke-width="1.25"/><circle cx="315" cy="74" r="2.05" fill="#fff" stroke="#000" stroke-width="1.25"/></g><g shape-rendering="geometricPrecision"><polygon points="311,64 318.4,68.2 311,72.4" fill="#000"/></g><rect x="319" y="64" width="2" height="7" fill="#000"/><rect x="332" y="70" width="11" height="8" fill="#000"/><rect x="331" y="71" width="13" height="6" fill="#000"/><rect x="332" y="71" width="11" height="6" fill="#ffff00"/><rect x="332" y="71" width="1" height="1" fill="#fffff0"/><rect x="334" y="71" width="1" height="1" fill="#fffff0"/><rect x="336" y="71" width="1" height="1" fill="#fffff0"/><rect x="338" y="71" width="1" height="1" fill="#fffff0"/><rect x="340" y="71" width="1" height="1" fill="#fffff0"/><rect x="342" y="71" width="1" height="1" fill="#fffff0"/><rect x="333" y="72" width="1" height="1" fill="#fffff0"/><rect x="335" y="72" width="1" height="1" fill="#fffff0"/><rect x="337" y="72" width="1" height="1" fill="#fffff0"/><rect x="339" y="72" width="1" height="1" fill="#fffff0"/><rect x="341" y="72" width="1" height="1" fill="#fffff0"/><rect x="332" y="73" width="1" height="1" fill="#fffff0"/><rect x="334" y="73" width="1" height="1" fill="#fffff0"/><rect x="336" y="73" width="1" height="1" fill="#fffff0"/><rect x="338" y="73" width="1" height="1" fill="#fffff0"/><rect x="340" y="73" width="1" height="1" fill="#fffff0"/><rect x="342" y="73" width="1" height="1" fill="#fffff0"/><rect x="333" y="74" width="1" height="1" fill="#fffff0"/><rect x="335" y="74" width="1" height="1" fill="#fffff0"/><rect x="337" y="74" width="1" height="1" fill="#fffff0"/><rect x="339" y="74" width="1" height="1" fill="#fffff0"/><rect x="341" y="74" width="1" height="1" fill="#fffff0"/><rect x="332" y="75" width="1" height="1" fill="#fffff0"/><rect x="334" y="75" width="1" height="1" fill="#fffff0"/><rect x="336" y="75" width="1" height="1" fill="#fffff0"/><rect x="338" y="75" width="1" height="1" fill="#fffff0"/><rect x="340" y="75" width="1" height="1" fill="#fffff0"/><rect x="342" y="75" width="1" height="1" fill="#fffff0"/><rect x="333" y="76" width="1" height="1" fill="#fffff0"/><rect x="335" y="76" width="1" height="1" fill="#fffff0"/><rect x="337" y="76" width="1" height="1" fill="#fffff0"/><rect x="339" y="76" width="1" height="1" fill="#fffff0"/><rect x="341" y="76" width="1" height="1" fill="#fffff0"/><g shape-rendering="geometricPrecision"><circle cx="335.5" cy="74" r="2.05" fill="#fff" stroke="#000" stroke-width="1.25"/><circle cx="340" cy="74" r="2.05" fill="#fff" stroke="#000" stroke-width="1.25"/></g><rect x="339" y="64" width="7" height="7" fill="#000"/><rect x="369" y="63" width="6" height="1" fill="#000"/><rect x="369" y="64" width="1" height="1" fill="#000"/><rect x="370" y="64" width="1" height="1" fill="#fff"/><rect x="371" y="64" width="1" height="1" fill="#c0c0c0"/><rect x="372" y="64" width="1" height="1" fill="#fff"/><rect x="373" y="64" width="1" height="1" fill="#c0c0c0"/><rect x="374" y="64" width="1" height="1" fill="#000"/><rect x="366" y="65" width="3" height="1" fill="#ffff00"/><rect x="369" y="65" width="1" height="1" fill="#000"/><rect x="370" y="65" width="2" height="1" fill="#c0c0c0"/><rect x="372" y="65" width="2" height="1" fill="#000"/><rect x="374" y="65" width="3" height="1" fill="#ffff00"/><rect x="377" y="65" width="1" height="1" fill="#000"/><rect x="366" y="66" width="1" height="1" fill="#ffff00"/><rect x="367" y="66" width="9" height="1" fill="#000"/><rect x="376" y="66" width="1" height="1" fill="#ffff00"/><rect x="377" y="66" width="2" height="1" fill="#000"/><rect x="366" y="67" width="1" height="1" fill="#ffff00"/><rect x="367" y="67" width="1" height="1" fill="#000"/><rect x="368" y="67" width="7" height="1" fill="#fff"/><rect x="375" y="67" width="1" height="1" fill="#000"/><rect x="376" y="67" width="1" height="1" fill="#ffff00"/><rect x="377" y="67" width="2" height="1" fill="#000"/><rect x="366" y="68" width="1" height="1" fill="#ffff00"/><rect x="367" y="68" width="1" height="1" fill="#000"/><rect x="368" y="68" width="7" height="1" fill="#008080"/><rect x="375" y="68" width="1" height="1" fill="#000"/><rect x="376" y="68" width="1" height="1" fill="#ffff00"/><rect x="377" y="68" width="2" height="1" fill="#000"/><rect x="366" y="69" width="1" height="1" fill="#ffff00"/><rect x="367" y="69" width="1" height="1" fill="#000"/><rect x="368" y="69" width="2" height="1" fill="#fff"/><rect x="370" y="69" width="1" height="1" fill="#008080"/><rect x="371" y="69" width="4" height="1" fill="#fff"/><rect x="375" y="69" width="1" height="1" fill="#000"/><rect x="376" y="69" width="1" height="1" fill="#ffff00"/><rect x="377" y="69" width="2" height="1" fill="#000"/><rect x="366" y="70" width="1" height="1" fill="#ffff00"/><rect x="367" y="70" width="1" height="1" fill="#000"/><rect x="368" y="70" width="7" height="1" fill="#008080"/><rect x="375" y="70" width="1" height="1" fill="#000"/><rect x="376" y="70" width="1" height="1" fill="#ffff00"/><rect x="377" y="70" width="2" height="1" fill="#000"/><rect x="366" y="71" width="1" height="1" fill="#ffff00"/><rect x="367" y="71" width="1" height="1" fill="#000"/><rect x="368" y="71" width="2" height="1" fill="#fff"/><rect x="370" y="71" width="1" height="1" fill="#008080"/><rect x="371" y="71" width="4" height="1" fill="#fff"/><rect x="375" y="71" width="1" height="1" fill="#000"/><rect x="376" y="71" width="1" height="1" fill="#ffff00"/><rect x="377" y="71" width="2" height="1" fill="#000"/><rect x="366" y="72" width="1" height="1" fill="#ffff00"/><rect x="367" y="72" width="1" height="1" fill="#000"/><rect x="368" y="72" width="7" height="1" fill="#008080"/><rect x="375" y="72" width="1" height="1" fill="#000"/><rect x="376" y="72" width="1" height="1" fill="#ffff00"/><rect x="377" y="72" width="2" height="1" fill="#000"/><rect x="366" y="73" width="1" height="1" fill="#ffff00"/><rect x="367" y="73" width="1" height="1" fill="#000"/><rect x="368" y="73" width="2" height="1" fill="#fff"/><rect x="370" y="73" width="1" height="1" fill="#008080"/><rect x="371" y="73" width="4" height="1" fill="#fff"/><rect x="375" y="73" width="1" height="1" fill="#000"/><rect x="376" y="73" width="1" height="1" fill="#ffff00"/><rect x="377" y="73" width="2" height="1" fill="#000"/><rect x="366" y="74" width="1" height="1" fill="#ffff00"/><rect x="367" y="74" width="1" height="1" fill="#000"/><rect x="368" y="74" width="7" height="1" fill="#008080"/><rect x="375" y="74" width="1" height="1" fill="#000"/><rect x="376" y="74" width="1" height="1" fill="#ffff00"/><rect x="377" y="74" width="2" height="1" fill="#000"/><rect x="366" y="75" width="11" height="1" fill="#ffff00"/><rect x="377" y="75" width="2" height="1" fill="#000"/><rect x="367" y="76" width="12" height="1" fill="#000"/><rect x="402" y="64" width="1" height="1" fill="#000"/><rect x="403" y="64" width="1" height="1" fill="#008000"/><rect x="404" y="64" width="1" height="1" fill="#fff"/><rect x="405" y="64" width="1" height="1" fill="#008000"/><rect x="406" y="64" width="2" height="1" fill="#0000ff"/><rect x="408" y="64" width="1" height="1" fill="#000"/><rect x="400" y="65" width="1" height="1" fill="#000"/><rect x="401" y="65" width="1" height="1" fill="#0000ff"/><rect x="402" y="65" width="2" height="1" fill="#fff"/><rect x="404" y="65" width="2" height="1" fill="#008000"/><rect x="406" y="65" width="1" height="1" fill="#0000ff"/><rect x="407" y="65" width="1" height="1" fill="#008000"/><rect x="408" y="65" width="1" height="1" fill="#0000ff"/><rect x="409" y="65" width="1" height="1" fill="#000"/><rect x="410" y="65" width="1" height="1" fill="#008000"/><rect x="411" y="65" width="1" height="1" fill="#000"/><rect x="399" y="66" width="1" height="1" fill="#000"/><rect x="400" y="66" width="1" height="1" fill="#0000ff"/><rect x="401" y="66" width="1" height="1" fill="#fff"/><rect x="402" y="66" width="4" height="1" fill="#008000"/><rect x="406" y="66" width="1" height="1" fill="#0000ff"/><rect x="407" y="66" width="1" height="1" fill="#008000"/><rect x="408" y="66" width="1" height="1" fill="#0000ff"/><rect x="409" y="66" width="2" height="1" fill="#008000"/><rect x="411" y="66" width="1" height="1" fill="#000"/><rect x="398" y="67" width="1" height="1" fill="#000"/><rect x="399" y="67" width="2" height="1" fill="#0000ff"/><rect x="401" y="67" width="5" height="1" fill="#008000"/><rect x="406" y="67" width="2" height="1" fill="#0000ff"/><rect x="408" y="67" width="1" height="1" fill="#008000"/><rect x="409" y="67" width="3" height="1" fill="#000"/><rect x="398" y="68" width="1" height="1" fill="#000"/><rect x="399" y="68" width="2" height="1" fill="#0000ff"/><rect x="401" y="68" width="5" height="1" fill="#008000"/><rect x="406" y="68" width="2" height="1" fill="#0000ff"/><rect x="408" y="68" width="1" height="1" fill="#000"/><rect x="409" y="68" width="3" height="1" fill="#00ff00"/><rect x="412" y="68" width="1" height="1" fill="#000"/><rect x="398" y="69" width="1" height="1" fill="#000"/><rect x="399" y="69" width="2" height="1" fill="#0000ff"/><rect x="401" y="69" width="5" height="1" fill="#008000"/><rect x="406" y="69" width="1" height="1" fill="#0000ff"/><rect x="407" y="69" width="1" height="1" fill="#000"/><rect x="408" y="69" width="2" height="1" fill="#00ff00"/><rect x="410" y="69" width="1" height="1" fill="#000"/><rect x="411" y="69" width="2" height="1" fill="#00ff00"/><rect x="413" y="69" width="1" height="1" fill="#000"/><rect x="398" y="70" width="1" height="1" fill="#000"/><rect x="399" y="70" width="2" height="1" fill="#0000ff"/><rect x="401" y="70" width="2" height="1" fill="#008000"/><rect x="403" y="70" width="3" height="1" fill="#0000ff"/><rect x="406" y="70" width="5" height="1" fill="#000"/><rect x="411" y="70" width="2" height="1" fill="#00ff00"/><rect x="413" y="70" width="1" height="1" fill="#000"/><rect x="398" y="71" width="1" height="1" fill="#000"/><rect x="399" y="71" width="3" height="1" fill="#0000ff"/><rect x="402" y="71" width="4" height="1" fill="#008000"/><rect x="406" y="71" width="4" height="1" fill="#000"/><rect x="410" y="71" width="2" height="1" fill="#00ff00"/><rect x="412" y="71" width="2" height="1" fill="#000"/><rect x="398" y="72" width="1" height="1" fill="#000"/><rect x="399" y="72" width="3" height="1" fill="#0000ff"/><rect x="402" y="72" width="5" height="1" fill="#008000"/><rect x="407" y="72" width="2" height="1" fill="#000"/><rect x="409" y="72" width="3" height="1" fill="#00ff00"/><rect x="412" y="72" width="1" height="1" fill="#000"/><rect x="399" y="73" width="1" height="1" fill="#000"/><rect x="400" y="73" width="3" height="1" fill="#0000ff"/><rect x="403" y="73" width="4" height="1" fill="#008000"/><rect x="407" y="73" width="2" height="1" fill="#000"/><rect x="409" y="73" width="2" height="1" fill="#00ff00"/><rect x="411" y="73" width="1" height="1" fill="#000"/><rect x="400" y="74" width="1" height="1" fill="#000"/><rect x="401" y="74" width="3" height="1" fill="#0000ff"/><rect x="404" y="74" width="2" height="1" fill="#008000"/><rect x="406" y="74" width="1" height="1" fill="#0000ff"/><rect x="407" y="74" width="5" height="1" fill="#000"/><rect x="401" y="75" width="1" height="1" fill="#000"/><rect x="402" y="75" width="3" height="1" fill="#0000ff"/><rect x="405" y="75" width="2" height="1" fill="#008000"/><rect x="407" y="75" width="1" height="1" fill="#0000ff"/><rect x="408" y="75" width="3" height="1" fill="#000"/><rect x="402" y="76" width="1" height="1" fill="#000"/><rect x="403" y="76" width="3" height="1" fill="#0000ff"/><rect x="406" y="76" width="1" height="1" fill="#008000"/><rect x="407" y="76" width="2" height="1" fill="#000"/><rect x="409" y="76" width="2" height="1" fill="#00ff00"/><rect x="411" y="76" width="1" height="1" fill="#000"/><rect x="403" y="77" width="6" height="1" fill="#000"/><rect x="409" y="77" width="2" height="1" fill="#00ff00"/><rect x="411" y="77" width="1" height="1" fill="#000"/><rect x="409" y="78" width="2" height="1" fill="#000"/><rect x="431" y="63" width="3" height="1" fill="#000"/><rect x="430" y="64" width="1" height="1" fill="#000"/><rect x="431" y="64" width="3" height="1" fill="#900000"/><rect x="434" y="64" width="1" height="1" fill="#000"/><rect x="429" y="65" width="1" height="1" fill="#000"/><rect x="430" y="65" width="1" height="1" fill="#cc0000"/><rect x="431" y="65" width="4" height="1" fill="#ffff00"/><rect x="435" y="65" width="1" height="1" fill="#000"/><rect x="428" y="66" width="1" height="1" fill="#000"/><rect x="429" y="66" width="1" height="1" fill="#cc0000"/><rect x="430" y="66" width="2" height="1" fill="#ffff00"/><rect x="432" y="66" width="2" height="1" fill="#cc0000"/><rect x="434" y="66" width="2" height="1" fill="#ffff00"/><rect x="436" y="66" width="1" height="1" fill="#000"/><rect x="427" y="67" width="1" height="1" fill="#000"/><rect x="428" y="67" width="2" height="1" fill="#cc0000"/><rect x="430" y="67" width="1" height="1" fill="#ffff00"/><rect x="431" y="67" width="3" height="1" fill="#cc0000"/><rect x="434" y="67" width="2" height="1" fill="#ffff00"/><rect x="436" y="67" width="1" height="1" fill="#cc0000"/><rect x="437" y="67" width="1" height="1" fill="#000"/><rect x="426" y="68" width="1" height="1" fill="#000"/><rect x="427" y="68" width="5" height="1" fill="#cc0000"/><rect x="432" y="68" width="3" height="1" fill="#ffff00"/><rect x="435" y="68" width="2" height="1" fill="#cc0000"/><rect x="437" y="68" width="1" height="1" fill="#000"/><rect x="425" y="69" width="1" height="1" fill="#000"/><rect x="426" y="69" width="4" height="1" fill="#cc0000"/><rect x="430" y="69" width="3" height="1" fill="#ffff00"/><rect x="433" y="69" width="3" height="1" fill="#cc0000"/><rect x="436" y="69" width="1" height="1" fill="#000"/><rect x="437" y="69" width="1" height="1" fill="#fff"/><rect x="438" y="69" width="1" height="1" fill="#000"/><rect x="424" y="70" width="1" height="1" fill="#000"/><rect x="425" y="70" width="3" height="1" fill="#cc0000"/><rect x="428" y="70" width="2" height="1" fill="#ffff00"/><rect x="430" y="70" width="5" height="1" fill="#cc0000"/><rect x="435" y="70" width="1" height="1" fill="#000"/><rect x="436" y="70" width="1" height="1" fill="#fff"/><rect x="437" y="70" width="1" height="1" fill="#000"/><rect x="423" y="71" width="1" height="1" fill="#000"/><rect x="424" y="71" width="10" height="1" fill="#cc0000"/><rect x="434" y="71" width="1" height="1" fill="#000"/><rect x="435" y="71" width="1" height="1" fill="#fff"/><rect x="436" y="71" width="1" height="1" fill="#000"/><rect x="422" y="72" width="1" height="1" fill="#000"/><rect x="423" y="72" width="2" height="1" fill="#cc0000"/><rect x="425" y="72" width="2" height="1" fill="#ffff00"/><rect x="427" y="72" width="6" height="1" fill="#cc0000"/><rect x="433" y="72" width="1" height="1" fill="#000"/><rect x="434" y="72" width="1" height="1" fill="#fff"/><rect x="435" y="72" width="1" height="1" fill="#000"/><rect x="421" y="73" width="1" height="1" fill="#000"/><rect x="422" y="73" width="1" height="1" fill="#fff"/><rect x="423" y="73" width="1" height="1" fill="#000"/><rect x="424" y="73" width="1" height="1" fill="#cc0000"/><rect x="425" y="73" width="2" height="1" fill="#ffff00"/><rect x="427" y="73" width="5" height="1" fill="#cc0000"/><rect x="432" y="73" width="1" height="1" fill="#000"/><rect x="433" y="73" width="1" height="1" fill="#fff"/><rect x="434" y="73" width="1" height="1" fill="#000"/><rect x="422" y="74" width="1" height="1" fill="#000"/><rect x="423" y="74" width="1" height="1" fill="#fff"/><rect x="424" y="74" width="1" height="1" fill="#000"/><rect x="425" y="74" width="6" height="1" fill="#cc0000"/><rect x="431" y="74" width="1" height="1" fill="#000"/><rect x="432" y="74" width="1" height="1" fill="#fff"/><rect x="433" y="74" width="1" height="1" fill="#000"/><rect x="423" y="75" width="1" height="1" fill="#000"/><rect x="424" y="75" width="1" height="1" fill="#fff"/><rect x="425" y="75" width="1" height="1" fill="#000"/><rect x="426" y="75" width="4" height="1" fill="#cc0000"/><rect x="430" y="75" width="1" height="1" fill="#000"/><rect x="431" y="75" width="1" height="1" fill="#fff"/><rect x="432" y="75" width="1" height="1" fill="#000"/><rect x="424" y="76" width="1" height="1" fill="#000"/><rect x="425" y="76" width="1" height="1" fill="#fff"/><rect x="426" y="76" width="1" height="1" fill="#000"/><rect x="427" y="76" width="2" height="1" fill="#cc0000"/><rect x="429" y="76" width="1" height="1" fill="#000"/><rect x="430" y="76" width="1" height="1" fill="#fff"/><rect x="431" y="76" width="1" height="1" fill="#000"/><rect x="425" y="77" width="1" height="1" fill="#000"/><rect x="426" y="77" width="4" height="1" fill="#fff"/><rect x="430" y="77" width="1" height="1" fill="#000"/><rect x="426" y="78" width="4" height="1" fill="#000"/></svg>

<div id="term" class="abs"></div>
<div class="t k" style="left:316px;top:85px">Additional partner addresses</div>
<div class="t g" style="left:736px;top:109px">System:</div>
<div class="t g" style="left:856px;top:109px">DEVELOP</div>
<div class="t g" style="left:16px;top:133px">Partner entry  . . :</div>
<div class="t g" style="left:292px;top:133px">menten</div>
<div class="t g" style="left:16px;top:157px">Description  . . . :</div>
<div class="t g" style="left:292px;top:157px">menten GmbH</div>
<div class="t g" style="left:16px;top:181px">Position to  . . . .</div>
<div class="t g" style="left:748px;top:205px">Address</div>
<div class="t b" style="left:16px;top:229px">Choose selection, press Enter.</div>
<div class="t b" style="left:40px;top:253px">2=change   3=Copy   4=Delete   5=Display</div>
<div class="t k" style="left:28px;top:301px">Se</div>
<div class="t k" style="left:88px;top:301px">Partner</div>
<div class="t k" style="left:832px;top:301px">Address</div>
<div class="t k" style="left:16px;top:325px">lect</div>
<div class="t k" style="left:88px;top:325px">addressing</div>
<div class="t k" style="left:832px;top:325px">type</div>
<div class="t g" style="left:88px;top:349px">unverteiltbcc<svg class="ast" width="12" height="24"><path d="M11.6 15.4H4.8L2.9 13.5V7.9L4.8 6H9.2L10.8 7.6V11.6M6.6 8.6A1.9 1.9 0 1 0 6.61 8.6Z" stroke="currentColor" stroke-width="1.35" fill="none"/></svg>menten-gmbh.de</div>
<div class="t g" style="left:832px;top:349px"><svg class="ast" width="12" height="24"><path d="M2.4 6.4L10 13.8M10 6.4L2.4 13.8M6.2 5.8V14.4" stroke="currentColor" stroke-width="1.9"/></svg>EMLBCC</div>
<div class="t g" style="left:88px;top:373px">unverteiltbcc1<svg class="ast" width="12" height="24"><path d="M11.6 15.4H4.8L2.9 13.5V7.9L4.8 6H9.2L10.8 7.6V11.6M6.6 8.6A1.9 1.9 0 1 0 6.61 8.6Z" stroke="currentColor" stroke-width="1.35" fill="none"/></svg>menten-gmbh.de</div>
<div class="t g" style="left:832px;top:373px"><svg class="ast" width="12" height="24"><path d="M2.4 6.4L10 13.8M10 6.4L2.4 13.8M6.2 5.8V14.4" stroke="currentColor" stroke-width="1.9"/></svg>EMLBCC</div>
<div class="t g" style="left:88px;top:397px">test<svg class="ast" width="12" height="24"><path d="M11.6 15.4H4.8L2.9 13.5V7.9L4.8 6H9.2L10.8 7.6V11.6M6.6 8.6A1.9 1.9 0 1 0 6.61 8.6Z" stroke="currentColor" stroke-width="1.35" fill="none"/></svg>menten-gmbh.de</div>
<div class="t g" style="left:832px;top:397px"><svg class="ast" width="12" height="24"><path d="M2.4 6.4L10 13.8M10 6.4L2.4 13.8M6.2 5.8V14.4" stroke="currentColor" stroke-width="1.9"/></svg>EMLCC</div>
<div class="t g" style="left:88px;top:421px">unverteiltcc<svg class="ast" width="12" height="24"><path d="M11.6 15.4H4.8L2.9 13.5V7.9L4.8 6H9.2L10.8 7.6V11.6M6.6 8.6A1.9 1.9 0 1 0 6.61 8.6Z" stroke="currentColor" stroke-width="1.35" fill="none"/></svg>menten-gmbh.de</div>
<div class="t g" style="left:832px;top:421px"><svg class="ast" width="12" height="24"><path d="M2.4 6.4L10 13.8M10 6.4L2.4 13.8M6.2 5.8V14.4" stroke="currentColor" stroke-width="1.9"/></svg>EMLCC</div>
<div class="t g" style="left:88px;top:445px">unverteiltcc1<svg class="ast" width="12" height="24"><path d="M11.6 15.4H4.8L2.9 13.5V7.9L4.8 6H9.2L10.8 7.6V11.6M6.6 8.6A1.9 1.9 0 1 0 6.61 8.6Z" stroke="currentColor" stroke-width="1.35" fill="none"/></svg>menten-gmbh.de</div>
<div class="t g" style="left:832px;top:445px"><svg class="ast" width="12" height="24"><path d="M2.4 6.4L10 13.8M10 6.4L2.4 13.8M6.2 5.8V14.4" stroke="currentColor" stroke-width="1.9"/></svg>EMLCC</div>
<div class="t g" style="left:88px;top:469px">info<svg class="ast" width="12" height="24"><path d="M11.6 15.4H4.8L2.9 13.5V7.9L4.8 6H9.2L10.8 7.6V11.6M6.6 8.6A1.9 1.9 0 1 0 6.61 8.6Z" stroke="currentColor" stroke-width="1.35" fill="none"/></svg><svg class="ast" width="12" height="24"><path d="M2.4 6.4L10 13.8M10 6.4L2.4 13.8M6.2 5.8V14.4" stroke="currentColor" stroke-width="1.9"/></svg>.<svg class="ast" width="12" height="24"><path d="M2.4 6.4L10 13.8M10 6.4L2.4 13.8M6.2 5.8V14.4" stroke="currentColor" stroke-width="1.9"/></svg></div>
<div class="t g" style="left:832px;top:469px"><svg class="ast" width="12" height="24"><path d="M2.4 6.4L10 13.8M10 6.4L2.4 13.8M6.2 5.8V14.4" stroke="currentColor" stroke-width="1.9"/></svg>EMLFRM</div>
<div class="t g" style="left:88px;top:493px">ralph.menten<svg class="ast" width="12" height="24"><path d="M11.6 15.4H4.8L2.9 13.5V7.9L4.8 6H9.2L10.8 7.6V11.6M6.6 8.6A1.9 1.9 0 1 0 6.61 8.6Z" stroke="currentColor" stroke-width="1.35" fill="none"/></svg>menten-gmbh.de</div>
<div class="t g" style="left:832px;top:493px"><svg class="ast" width="12" height="24"><path d="M2.4 6.4L10 13.8M10 6.4L2.4 13.8M6.2 5.8V14.4" stroke="currentColor" stroke-width="1.9"/></svg>EMLTO</div>
<div class="t g" style="left:88px;top:517px">02202239923</div>
<div class="t g" style="left:832px;top:517px"><svg class="ast" width="12" height="24"><path d="M2.4 6.4L10 13.8M10 6.4L2.4 13.8M6.2 5.8V14.4" stroke="currentColor" stroke-width="1.9"/></svg>FAXTO</div>
<div class="t g" style="left:88px;top:541px">02202239923</div>
<div class="t g" style="left:832px;top:541px"><svg class="ast" width="12" height="24"><path d="M2.4 6.4L10 13.8M10 6.4L2.4 13.8M6.2 5.8V14.4" stroke="currentColor" stroke-width="1.9"/></svg>SMSTO</div>
<div class="t k" style="left:880px;top:589px">Bottom</div>
<div class="t b" style="left:16px;top:613px">F3=Exit   F5=Refresh   F6=Add   F12=Cancel</div>
<div class="t k" style="left:16px;top:637px"><span class="cp">©</span> menten GmbH, 2006.</div>
<div class="ul" style="left:292px;top:200px;width:672px"></div>
<div class="ul" style="left:4px;top:224px;width:48px"></div>
<div class="ul" style="left:28px;top:368px;width:12px"></div>
<div class="ul" style="left:28px;top:392px;width:12px"></div>
<div class="ul" style="left:28px;top:416px;width:12px"></div>
<div class="ul" style="left:28px;top:440px;width:12px"></div>
<div class="ul" style="left:28px;top:464px;width:12px"></div>
<div class="ul" style="left:28px;top:488px;width:12px"></div>
<div class="ul" style="left:28px;top:512px;width:12px"></div>
<div class="ul" style="left:28px;top:536px;width:12px"></div>
<div class="ul" style="left:28px;top:560px;width:12px"></div>
<div class="abs" style="left:28px;top:370px;width:12px;height:2px;background:#000"></div>

<div id="oia" class="abs"></div>
<div id="status" class="abs"></div>
<div class="pan" style="left:4px;width:24px"></div>
<div class="pan" style="left:30px;width:625px"></div>
<div class="pan" style="left:657px;width:286px"></div>
<div class="abs" style="left:32px;top:690px;font-size:12px;letter-spacing:0.3px;line-height:19px;white-space:nowrap">I902 - Sitzung wurde erfolgreich gestartet.</div>

<svg class="abs" style="left:0;top:0" width="968" height="33"><defs><linearGradient id="gb" x1="0" y1="0" x2="1" y2="1"><stop offset="0" stop-color="#7aa4f6"/><stop offset="0.35" stop-color="#3f72ec"/><stop offset="1" stop-color="#2358e2"/></linearGradient><linearGradient id="gr" x1="0" y1="0" x2="1" y2="1"><stop offset="0" stop-color="#ec8a66"/><stop offset="0.4" stop-color="#e2603a"/><stop offset="1" stop-color="#cc4014"/></linearGradient></defs><rect x="886.5" y="6.5" width="23" height="23" rx="3" fill="url(#gb)" stroke="#fff"/><rect x="890" y="22" width="9" height="3" fill="#fff"/><rect x="912.5" y="6.5" width="23" height="23" rx="3" fill="url(#gb)" stroke="#fff"/><path d="M917 11h13v13h-13z M918.3 14v8.7h10.4v-8.7z" fill="#fff" fill-rule="evenodd"/><rect x="938.5" y="6.5" width="23" height="23" rx="3" fill="url(#gr)" stroke="#fff"/><path d="M943.2 11.6 L955.6 24 M955.6 11.6 L943.2 24" stroke="#fff" stroke-width="2.6" stroke-linecap="square"/><g shape-rendering="crispEdges"><rect x="964" y="4" width="1" height="29" fill="#0050ec"/><rect x="965" y="4" width="1" height="29" fill="#0040d8"/><rect x="966" y="4" width="1" height="29" fill="#0026a8"/><rect x="967" y="4" width="1" height="29" fill="#001c94"/><rect x="0" y="5" width="1" height="28" fill="#0036d0"/></g><g shape-rendering="crispEdges"><rect x="0" y="0" width="5" height="1" fill="#d8d0b0"/><rect x="0" y="1" width="3" height="1" fill="#c8c0a0"/><rect x="0" y="2" width="2" height="1" fill="#c0b898"/><rect x="0" y="3" width="1" height="2" fill="#b8b090"/><rect x="963" y="0" width="2" height="1" fill="#000"/><rect x="965" y="0" width="2" height="1" fill="#fff"/><rect x="967" y="0" width="1" height="1" fill="#000"/><rect x="965" y="1" width="1" height="1" fill="#000"/><rect x="966" y="1" width="2" height="1" fill="#fff"/><rect x="966" y="2" width="2" height="1" fill="#000"/><rect x="967" y="3" width="1" height="2" fill="#fff"/></g><g shape-rendering="crispEdges"><rect x="18" y="11" width="1" height="1" fill="#ffff00"/><rect x="19" y="11" width="2" height="1" fill="#fff"/><rect x="21" y="11" width="1" height="1" fill="#ffff00"/><rect x="22" y="11" width="1" height="1" fill="#000"/><rect x="18" y="12" width="5" height="1" fill="#000"/><rect x="6" y="13" width="8" height="1" fill="#000"/><rect x="18" y="13" width="1" height="1" fill="#000"/><rect x="19" y="13" width="3" height="1" fill="#ffff00"/><rect x="22" y="13" width="1" height="1" fill="#000"/><rect x="6" y="14" width="1" height="1" fill="#000"/><rect x="7" y="14" width="6" height="1" fill="#c0c0c0"/><rect x="13" y="14" width="1" height="1" fill="#000"/><rect x="18" y="14" width="1" height="1" fill="#000"/><rect x="19" y="14" width="1" height="1" fill="#00ff00"/><rect x="20" y="14" width="2" height="1" fill="#ffff00"/><rect x="22" y="14" width="1" height="1" fill="#000"/><rect x="6" y="15" width="1" height="1" fill="#000"/><rect x="7" y="15" width="1" height="1" fill="#c0c0c0"/><rect x="8" y="15" width="1" height="1" fill="#ff0000"/><rect x="9" y="15" width="2" height="1" fill="#00ff00"/><rect x="11" y="15" width="2" height="1" fill="#c0c0c0"/><rect x="13" y="15" width="1" height="1" fill="#000"/><rect x="17" y="15" width="1" height="1" fill="#ff0000"/><rect x="18" y="15" width="1" height="1" fill="#000"/><rect x="19" y="15" width="1" height="1" fill="#00ff00"/><rect x="20" y="15" width="2" height="1" fill="#ffff00"/><rect x="22" y="15" width="1" height="1" fill="#000"/><rect x="6" y="16" width="1" height="1" fill="#000"/><rect x="7" y="16" width="1" height="1" fill="#c0c0c0"/><rect x="8" y="16" width="1" height="1" fill="#ff0000"/><rect x="9" y="16" width="3" height="1" fill="#00ff00"/><rect x="12" y="16" width="1" height="1" fill="#c0c0c0"/><rect x="13" y="16" width="5" height="1" fill="#ff0000"/><rect x="18" y="16" width="1" height="1" fill="#000"/><rect x="19" y="16" width="3" height="1" fill="#ffff00"/><rect x="22" y="16" width="1" height="1" fill="#000"/><rect x="6" y="17" width="1" height="1" fill="#000"/><rect x="7" y="17" width="1" height="1" fill="#c0c0c0"/><rect x="8" y="17" width="2" height="1" fill="#0000ff"/><rect x="10" y="17" width="2" height="1" fill="#00ff00"/><rect x="12" y="17" width="1" height="1" fill="#c0c0c0"/><rect x="13" y="17" width="1" height="1" fill="#000"/><rect x="18" y="17" width="1" height="1" fill="#000"/><rect x="19" y="17" width="1" height="1" fill="#00ff00"/><rect x="20" y="17" width="3" height="1" fill="#000"/><rect x="6" y="18" width="1" height="1" fill="#000"/><rect x="7" y="18" width="1" height="1" fill="#c0c0c0"/><rect x="8" y="18" width="3" height="1" fill="#0000ff"/><rect x="11" y="18" width="1" height="1" fill="#00ff00"/><rect x="12" y="18" width="1" height="1" fill="#c0c0c0"/><rect x="13" y="18" width="1" height="1" fill="#000"/><rect x="18" y="18" width="5" height="1" fill="#000"/><rect x="6" y="19" width="1" height="1" fill="#000"/><rect x="7" y="19" width="6" height="1" fill="#c0c0c0"/><rect x="13" y="19" width="2" height="1" fill="#000"/><rect x="18" y="19" width="5" height="1" fill="#000"/><rect x="7" y="20" width="1" height="1" fill="#000"/><rect x="8" y="20" width="4" height="1" fill="#808080"/><rect x="12" y="20" width="2" height="1" fill="#000"/><rect x="18" y="20" width="5" height="1" fill="#000"/><rect x="8" y="21" width="5" height="1" fill="#000"/><rect x="18" y="21" width="1" height="1" fill="#000"/><rect x="19" y="21" width="1" height="1" fill="#fff"/><rect x="20" y="21" width="3" height="1" fill="#000"/><rect x="18" y="22" width="1" height="1" fill="#000"/><rect x="19" y="22" width="3" height="1" fill="#ffff00"/><rect x="22" y="22" width="1" height="1" fill="#000"/><rect x="18" y="23" width="1" height="1" fill="#000"/><rect x="19" y="23" width="3" height="1" fill="#ffff00"/><rect x="22" y="23" width="1" height="1" fill="#000"/><rect x="18" y="24" width="5" height="1" fill="#000"/></g></svg>
<svg class="abs" style="left:0;top:0" width="968" height="711"><g shape-rendering="crispEdges"><rect x="15" y="690" width="7" height="1" fill="#fff"/><rect x="15" y="691" width="1" height="1" fill="#fff"/><rect x="16" y="691" width="5" height="1" fill="#000"/><rect x="21" y="691" width="1" height="1" fill="#fff"/><rect x="22" y="691" width="1" height="1" fill="#000"/><rect x="15" y="692" width="1" height="1" fill="#fff"/><rect x="16" y="692" width="1" height="1" fill="#000"/><rect x="21" y="692" width="1" height="1" fill="#fff"/><rect x="22" y="692" width="1" height="1" fill="#000"/><rect x="15" y="693" width="1" height="1" fill="#fff"/><rect x="16" y="693" width="1" height="1" fill="#000"/><rect x="21" y="693" width="1" height="1" fill="#fff"/><rect x="22" y="693" width="1" height="1" fill="#000"/><rect x="15" y="694" width="1" height="1" fill="#fff"/><rect x="16" y="694" width="1" height="1" fill="#000"/><rect x="21" y="694" width="1" height="1" fill="#fff"/><rect x="22" y="694" width="1" height="1" fill="#000"/><rect x="15" y="695" width="1" height="1" fill="#fff"/><rect x="16" y="695" width="1" height="1" fill="#000"/><rect x="21" y="695" width="1" height="1" fill="#fff"/><rect x="22" y="695" width="1" height="1" fill="#000"/><rect x="9" y="696" width="6" height="1" fill="#000"/><rect x="15" y="696" width="1" height="1" fill="#fff"/><rect x="16" y="696" width="1" height="1" fill="#000"/><rect x="21" y="696" width="1" height="1" fill="#fff"/><rect x="22" y="696" width="1" height="1" fill="#000"/><rect x="8" y="697" width="1" height="1" fill="#000"/><rect x="9" y="697" width="2" height="1" fill="#fff"/><rect x="11" y="697" width="7" height="1" fill="#000"/><rect x="20" y="697" width="3" height="1" fill="#000"/><rect x="8" y="698" width="1" height="1" fill="#000"/><rect x="9" y="698" width="1" height="1" fill="#fff"/><rect x="10" y="698" width="7" height="1" fill="#c0c0c0"/><rect x="17" y="698" width="1" height="1" fill="#000"/><rect x="8" y="699" width="1" height="1" fill="#000"/><rect x="9" y="699" width="1" height="1" fill="#fff"/><rect x="10" y="699" width="2" height="1" fill="#c0c0c0"/><rect x="12" y="699" width="1" height="1" fill="#000"/><rect x="13" y="699" width="3" height="1" fill="#c0c0c0"/><rect x="16" y="699" width="1" height="1" fill="#808080"/><rect x="17" y="699" width="1" height="1" fill="#000"/><rect x="8" y="700" width="1" height="1" fill="#000"/><rect x="9" y="700" width="1" height="1" fill="#fff"/><rect x="10" y="700" width="2" height="1" fill="#c0c0c0"/><rect x="12" y="700" width="1" height="1" fill="#000"/><rect x="13" y="700" width="3" height="1" fill="#c0c0c0"/><rect x="16" y="700" width="1" height="1" fill="#808080"/><rect x="17" y="700" width="1" height="1" fill="#000"/><rect x="8" y="701" width="1" height="1" fill="#000"/><rect x="9" y="701" width="1" height="1" fill="#fff"/><rect x="10" y="701" width="2" height="1" fill="#c0c0c0"/><rect x="12" y="701" width="1" height="1" fill="#000"/><rect x="13" y="701" width="3" height="1" fill="#c0c0c0"/><rect x="16" y="701" width="1" height="1" fill="#808080"/><rect x="17" y="701" width="1" height="1" fill="#000"/><rect x="8" y="702" width="1" height="1" fill="#000"/><rect x="9" y="702" width="1" height="1" fill="#fff"/><rect x="10" y="702" width="5" height="1" fill="#c0c0c0"/><rect x="15" y="702" width="2" height="1" fill="#808080"/><rect x="17" y="702" width="1" height="1" fill="#000"/><rect x="9" y="703" width="1" height="1" fill="#000"/><rect x="10" y="703" width="1" height="1" fill="#fff"/><rect x="11" y="703" width="5" height="1" fill="#808080"/><rect x="16" y="703" width="1" height="1" fill="#000"/><rect x="10" y="704" width="6" height="1" fill="#000"/></g><g stroke-width="1.2"><path d="M951.5 705.5 L963 694" stroke="#fff"/><path d="M952.5 705.5 L963 695" stroke="#a09c88"/><path d="M955.5 705.5 L963 698" stroke="#fff"/><path d="M956.5 705.5 L963 699" stroke="#a09c88"/><path d="M959.5 705.5 L963 702" stroke="#fff"/><path d="M960.5 705.5 L963 703" stroke="#a09c88"/></g></svg>
<div class="lb abs"></div><div class="rb abs"></div><div class="bb abs"></div>
</body></html>
